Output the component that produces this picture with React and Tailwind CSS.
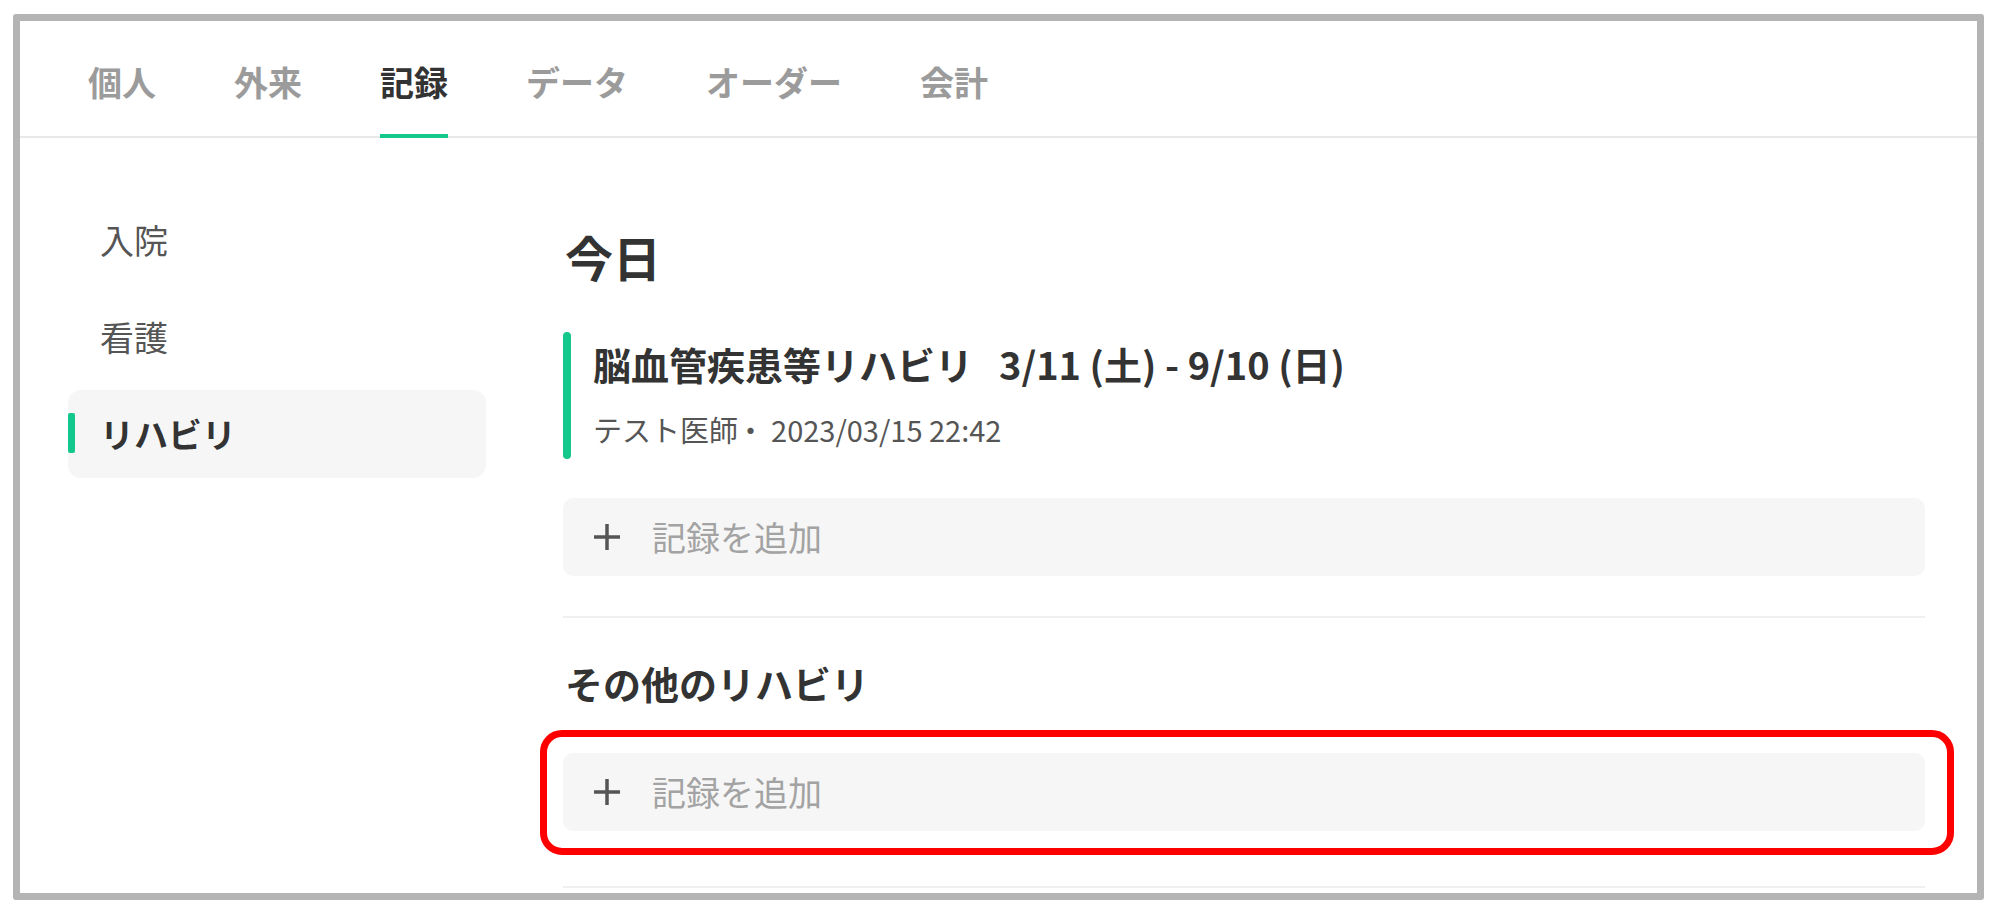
import React from 'react';

const tabs = ['個人', '外来', '記録', 'データ', 'オーダー', '会計'];
const sideItems = ['入院', '看護', 'リハビリ'];

function PlusIcon() {
  return (
    <svg width="30" height="30" viewBox="0 0 30 30" className="shrink-0">
      <path d="M15 2v26M2 15h26" stroke="#555" strokeWidth="3.5" strokeLinecap="butt" fill="none" />
    </svg>
  );
}

function AddButton() {
  return (
    <button className="w-full h-[78px] bg-[#f6f6f6] rounded-[10px] flex items-center pl-[29px] gap-[30px] text-left">
      <PlusIcon />
      <span className="text-[34px] leading-[44px] text-[#a3a3a3]">記録を追加</span>
    </button>
  );
}

export default function App() {
  return (
    <div className="w-[2000px] h-[916px] bg-white pt-[14px] pl-[13px]" style={{ fontFamily: '"Noto Sans CJK JP", "Noto Sans", sans-serif' }}>
      <div className="w-[1971px] h-[886px] border-[7px] border-[#b4b4b4] rounded-[3px] overflow-hidden bg-white">
        {/* tab bar */}
        <div className="h-[117px] border-b-2 border-[#e8e8e8] flex items-stretch gap-[78px] pl-[68px]">
          {tabs.map((t) => {
            const active = t === '記録';
            return (
              <div
                key={t}
                className={
                  'flex items-center pt-[8px] -mb-[2px] border-b-4 text-[34px] leading-[44px] font-bold ' +
                  (active ? 'border-[#14c78c] text-[#333]' : 'border-transparent text-[#9b9b9b]')
                }
              >
                {t}
              </div>
            );
          })}
        </div>

        <div className="flex pl-[48px] pr-[52px] gap-[77px]">
          {/* sidebar */}
          <div className="w-[418px] shrink-0 pt-[58px] flex flex-col gap-[9px]">
            {sideItems.map((s) => {
              const active = s === 'リハビリ';
              return (
                <div
                  key={s}
                  className={
                    'h-[88px] rounded-[13px] flex items-center pl-[32px] relative text-[34px] leading-[44px] ' +
                    (active ? 'bg-[#f6f6f6] font-bold text-[#333]' : 'text-[#555]')
                  }
                >
                  {active && <span className="absolute left-0 top-[23px] w-[7px] h-[40px] rounded-[2px] bg-[#14c78c]" />}
                  {s}
                </div>
              );
            })}
          </div>

          {/* main */}
          <div className="flex-1 pt-[88px]">
            <h2 className="text-[48px] leading-[60px] font-bold text-[#333] pl-[2px]">今日</h2>

            <div className="mt-[46px] flex gap-[22px]">
              <div className="w-[8px] rounded-full bg-[#14c78c]" />
              <div className="pt-[7px] pb-[10px]">
                <div className="text-[38px] leading-[50px] font-bold text-[#333]">
                  脳血管疾患等リハビリ<span className="ml-[26px]">3/11 (土) - 9/10 (日)</span>
                </div>
                <div className="mt-[20px] text-[29px] leading-[40px] text-[#555]">
                  テスト医師<span className="ml-[-2px] mr-[6px]">・</span>2023/03/15 22:42
                </div>
              </div>
            </div>

            <div className="mt-[39px]">
              <AddButton />
            </div>

            <div className="mt-[40px] h-[2px] bg-[#efefef]" />

            <h3 className="mt-[40px] text-[38px] leading-[50px] font-bold text-[#333] pl-[2px]">その他のリハビリ</h3>

            <div className="mt-[45px] relative">
              <AddButton />
              <div className="absolute -left-[23px] -right-[29px] -top-[23px] -bottom-[24px] border-[7px] border-[#ff0000] rounded-[22px] pointer-events-none" />
            </div>

            <div className="mt-[55px] h-[2px] bg-[#efefef]" />
          </div>
        </div>
      </div>
    </div>
  );
}
